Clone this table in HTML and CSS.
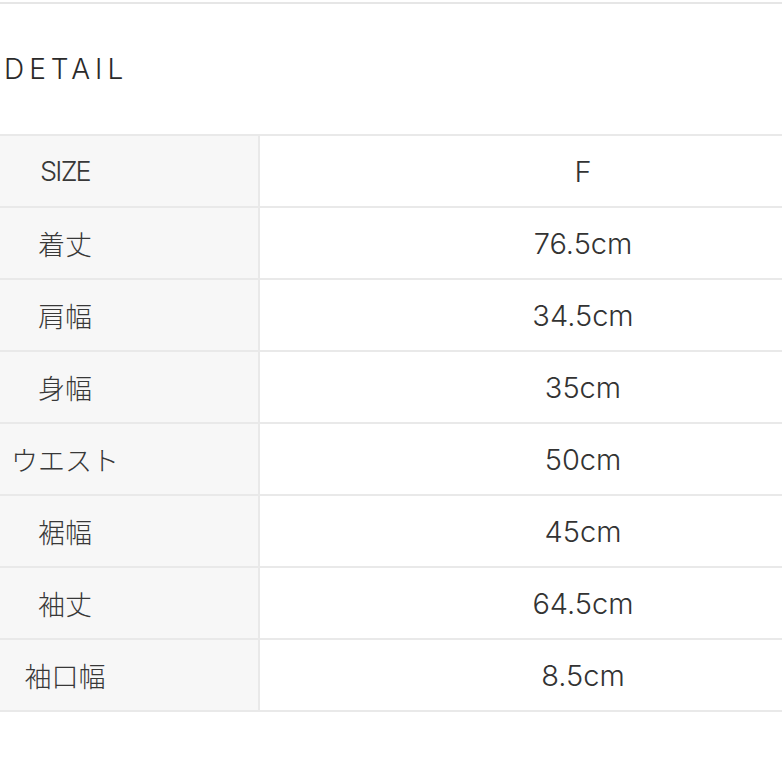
FILE: index.html
```html
<!DOCTYPE html>
<html lang="ja">
<head>
<meta charset="utf-8">
<link rel="stylesheet" href="styles.css">
</head>
<body>
<div class="page">
  <div class="topline"></div>
  <h2 class="title">DETAIL</h2>
  <table class="spec">
    <tr><th class="latin">SIZE</th><td>F</td></tr>
    <tr><th>着丈</th><td>76.5cm</td></tr>
    <tr><th>肩幅</th><td>34.5cm</td></tr>
    <tr><th>身幅</th><td>35cm</td></tr>
    <tr><th>ウエスト</th><td>50cm</td></tr>
    <tr><th>裾幅</th><td>45cm</td></tr>
    <tr><th>袖丈</th><td>64.5cm</td></tr>
    <tr><th>袖口幅</th><td>8.5cm</td></tr>
  </table>
</div>
</body>
</html>
```

FILE: styles.css
```css
html, body {
  margin: 0;
  padding: 0;
  background: #ffffff;
  overflow: hidden;
}
.page {
  width: 782px;
  height: 782px;
  overflow: hidden;
  font-family: Inter, "Noto Sans CJK JP", sans-serif;
  color: #333333;
}
.topline {
  height: 2px;
  margin-top: 2px;
  background: #e6e6e6;
}
.title {
  margin: 0;
  padding: 49px 0 0 4px;
  height: 82px;
  box-sizing: border-box;
  font-weight: 300;
  font-size: 28px;
  line-height: 32px;
  letter-spacing: 5px;
  color: #2a2a2a;
  font-family: Inter, sans-serif;
}
.spec {
  margin-top: 48px;
  margin-left: -130px;
  width: 1038px;
  border-collapse: collapse;
  font-size: 27px;
}
.spec th, .spec td {
  height: 70px;
  padding: 0;
  border: 2px solid #e9e9e9;
  text-align: center;
  vertical-align: middle;
  font-weight: 400;
}
.spec th {
  width: 386px;
  background: #f7f7f7;
  font-family: "Noto Sans CJK JP", sans-serif;
  font-weight: 300;
  color: #383838;
}
.spec th.latin {
  font-family: Inter, sans-serif;
  font-size: 27px;
  letter-spacing: -1.8px;
  font-weight: 300;
}
.spec td {
  background: #ffffff;
  font-size: 29px;
  font-weight: 300;
  color: #333333;
}
```
